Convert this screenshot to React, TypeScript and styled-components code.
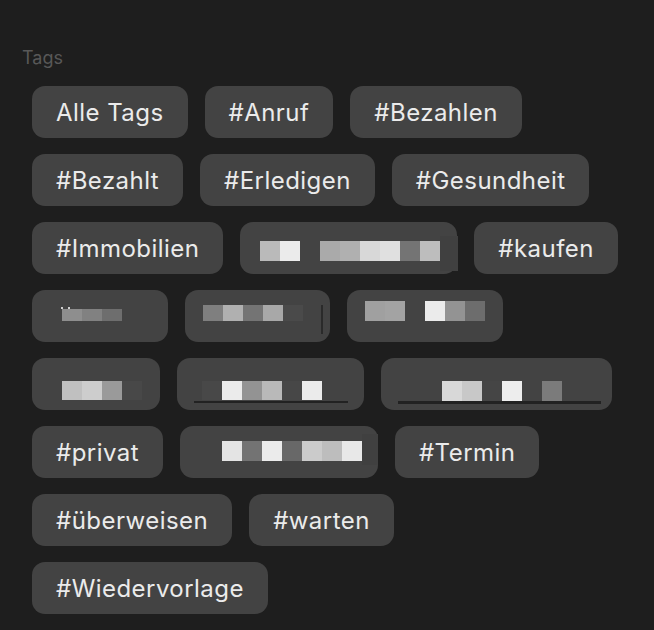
import { ReactElement } from 'react';
import styled, { createGlobalStyle } from 'styled-components';

const GlobalStyle = createGlobalStyle`
  html, body {
    margin: 0;
    padding: 0;
    background-color: #1e1e1e;
  }
  body {
    font-family: Inter, "Noto Sans", "DejaVu Sans", sans-serif;
  }
`;

const Panel = styled.div`
  width: 654px;
  height: 630px;
  box-sizing: border-box;
  padding: 46px 0 0 22px;
  background-color: #1e1e1e;
  overflow: hidden;
`;

const Label = styled.div`
  color: #585858;
  font-size: 18px;
  font-weight: 400;
  line-height: 24px;
  margin-bottom: 16px;
`;

const Rows = styled.div`
  display: flex;
  flex-direction: column;
  gap: 16px;
  padding-left: 10px;
`;

const Row = styled.div`
  display: flex;
  flex-direction: row;
  gap: 17px;
`;

const Chip = styled.div`
  position: relative;
  display: flex;
  align-items: center;
  box-sizing: border-box;
  height: 52px;
  padding: 0 24px 0 24px;
  border-radius: 13px;
  background-color: #434343;
  color: #ebebeb;
  font-size: 24px;
  font-weight: 400;
  letter-spacing: 0.45px;
  white-space: nowrap;
`;

const MaskedChip = styled(Chip)<{ $width: number }>`
  width: ${({ $width }) => $width}px;
  padding: 0;
  align-items: flex-start;
`;

const Mosaic = styled.div<{ $left: number; $top: number }>`
  display: flex;
  margin: ${({ $top, $left }) => `${$top}px 0 0 ${$left}px`};
`;

const Pixel = styled.div<{ $color: string; $w: number; $h: number }>`
  width: ${({ $w }) => $w}px;
  height: ${({ $h }) => $h}px;
  background-color: ${({ $color }) => $color};
`;

const Underline = styled.div<{ $left: number; $width: number; $h: number }>`
  position: absolute;
  left: ${({ $left }) => $left}px;
  top: 43px;
  width: ${({ $width }) => $width}px;
  height: ${({ $h }) => $h}px;
  background-color: #222222;
`;

const Overhang = styled.div<{ $left: number; $top: number; $w: number; $h: number }>`
  position: absolute;
  left: ${({ $left }) => $left}px;
  top: ${({ $top }) => $top}px;
  width: ${({ $w }) => $w}px;
  height: ${({ $h }) => $h}px;
  background-color: #404040;
`;

const Stroke = styled.div<{ $left: number }>`
  position: absolute;
  left: ${({ $left }) => $left}px;
  top: 15px;
  width: 2px;
  height: 29px;
  background-color: #2a2a2a;
`;

const Dot = styled.div<{ $left: number }>`
  position: absolute;
  left: ${({ $left }) => $left}px;
  top: 17px;
  width: 2px;
  height: 2px;
  background-color: #d0d0d0;
`;

interface IMask {
  width: number;
  left: number;
  top: number;
  h: number;
  cells: (string | null)[];
  underline?: { left: number; width: number; h: number };
  overhang?: { left: number; top: number; w: number; h: number };
  stroke?: number;
  dots?: number[];
}

type Item = string | IMask;

const rows: Item[][] = [
  ['Alle Tags', '#Anruf', '#Bezahlen'],
  ['#Bezahlt', '#Erledigen', '#Gesundheit'],
  [
    '#Immobilien',
    {
      width: 217,
      left: 20,
      top: 19,
      h: 20,
      cells: ['#bababa', '#ebebeb', null, '#aaaaaa', '#b0b0b0', '#d8d8d8', '#e0e0e0', '#747474', '#bdbdbd'],
      overhang: { left: 200, top: 14, w: 18, h: 35 },
    },
    '#kaufen',
  ],
  [
    { width: 136, left: 30, top: 19, h: 12, cells: ['#8e8e8e', '#818181', '#6e6e6e'], dots: [29, 36] },
    { width: 145, left: 18, top: 15, h: 16, cells: ['#7f7f7f', '#b0b0b0', '#747474', '#a8a8a8', '#4a4a4a'], stroke: 136 },
    { width: 156, left: 18, top: 11, h: 20, cells: ['#a0a0a0', '#a3a3a3', null, '#ebebeb', '#939393', '#6d6d6d'] },
  ],
  [
    { width: 128, left: 30, top: 23, h: 19, cells: ['#c0c0c0', '#cdcdcd', '#9a9a9a', '#484848'] },
    {
      width: 187,
      left: 25,
      top: 23,
      h: 19,
      cells: ['#484848', '#ebebeb', '#939393', '#b9b9b9', '#474747', '#ebebeb'],
      underline: { left: 17, width: 154, h: 2 },
    },
    {
      width: 231,
      left: 61,
      top: 23,
      h: 20,
      cells: ['#d8d8d8', '#c8c8c8', '#454545', '#ededed', '#434343', '#7b7b7b'],
      underline: { left: 17, width: 203, h: 3 },
    },
  ],
  [
    '#privat',
    {
      width: 198,
      left: 42,
      top: 15,
      h: 20,
      cells: ['#e4e4e4', '#737373', '#ebebeb', '#686868', '#cbcbcb', '#bdbdbd', '#e8e8e8'],
      overhang: { left: 182, top: 8, w: 16, h: 31 },
    },
    '#Termin',
  ],
  ['#überweisen', '#warten'],
  ['#Wiedervorlage'],
];

const toOverhang = (o: { left: number; top: number; w: number; h: number }) => ({
  $left: o.left,
  $top: o.top,
  $w: o.w,
  $h: o.h,
});

const MaskedTag = ({ mask }: { mask: IMask }): ReactElement => (
  <MaskedChip $width={mask.width}>
    <Mosaic $left={mask.left} $top={mask.top}>
      {mask.cells.map((c, i) => (
        <Pixel key={i} $color={c ?? 'transparent'} $w={20} $h={mask.h} />
      ))}
    </Mosaic>
    {mask.overhang && <Overhang {...toOverhang(mask.overhang)} />}
    {mask.underline && (
      <Underline $left={mask.underline.left} $width={mask.underline.width} $h={mask.underline.h} />
    )}
    {mask.stroke !== undefined && <Stroke $left={mask.stroke} />}
    {mask.dots?.map((d) => <Dot key={d} $left={d} />)}
  </MaskedChip>
);

const App = (): ReactElement => {
  return (
    <>
      <GlobalStyle />
      <Panel>
        <Label>Tags</Label>
        <Rows>
          {rows.map((row, r) => (
            <Row key={r}>
              {row.map((item, i) =>
                typeof item === 'string' ? <Chip key={i}>{item}</Chip> : <MaskedTag key={i} mask={item} />,
              )}
            </Row>
          ))}
        </Rows>
      </Panel>
    </>
  );
};

export default App;
